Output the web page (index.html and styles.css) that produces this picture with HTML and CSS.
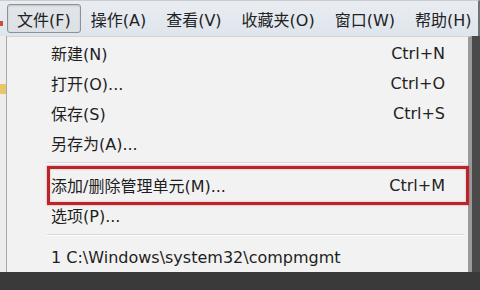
FILE: index.html
```html
<!DOCTYPE html>
<html lang="zh-CN">
<head>
<meta charset="utf-8">
<link rel="stylesheet" href="styles.css">
</head>
<body>
<div class="window">
  <div class="menubar">
    <span class="mitem pressed">文件(F)</span>
    <span class="mitem">操作(A)</span>
    <span class="mitem">查看(V)</span>
    <span class="mitem">收藏夹(O)</span>
    <span class="mitem">窗口(W)</span>
    <span class="mitem">帮助(H)</span>
    <span class="mark red"></span>
  </div>
  <div class="content">
    <div class="leftstrip">
      <span class="mark yellow"></span>
    </div>
    <div class="dropdown">
      <div class="row"><span>新建(N)</span><span class="key">Ctrl+N</span></div>
      <div class="row"><span>打开(O)...</span><span class="key">Ctrl+O</span></div>
      <div class="row"><span>保存(S)</span><span class="key">Ctrl+S</span></div>
      <div class="row"><span>另存为(A)...</span></div>
      <div class="sep"></div>
      <div class="row"><span>添加/删除管理单元(M)...</span><span class="key">Ctrl+M</span></div>
      <div class="row"><span>选项(P)...</span></div>
      <div class="sep"></div>
      <div class="row"><span>1 C:\Windows\system32\compmgmt</span></div>
      <div class="highlight"></div>
    </div>
    <div class="rightstrip"></div>
  </div>
</div>
<div class="bottom"></div>
</body>
</html>
```
FILE: styles.css
```css
html, body {
  margin: 0;
  padding: 0;
}
body {
  width: 480px;
  height: 290px;
  overflow: hidden;
  background: #3c3c3c;
  font-family: "DejaVu Sans", "Noto Sans CJK SC", sans-serif;
  font-size: 16px;
  color: #1e1e1e;
}
.window {
  height: 272px;
  display: flex;
  flex-direction: column;
  background: #f0f0f0;
}
.menubar {
  height: 36px;
  flex-shrink: 0;
  box-sizing: border-box;
  display: flex;
  align-items: center;
  padding-left: 7px;
  background: linear-gradient(#e9edf2, #dfe5ec);
  border-top: 1px solid #c9ccd0;
  border-right: 2px solid #6f7276;
  overflow: hidden;
  white-space: nowrap;
  position: relative;
}
.mitem {
  flex-shrink: 0;
  height: 29px;
  box-sizing: border-box;
  display: flex;
  align-items: center;
  padding: 0 9px;
  border: 1px solid transparent;
  color: #222;
}
.mitem.pressed {
  border-color: #8c9198;
  border-radius: 3px;
  background: linear-gradient(#e2e6eb, #dde1e6);
  box-shadow: inset 0 1px 2px rgba(0,0,0,0.15);
}
.content {
  flex: 1;
  display: flex;
}
.leftstrip {
  width: 7px;
  background: #ededed;
  border-right: 1px solid #a9a9a9;
  box-sizing: border-box;
  position: relative;
}
.mark {
  position: absolute;
  left: 0;
  width: 3px;
}
.mark.red {
  top: 20px;
  height: 5px;
  background: #d24a3c;
}
.mark.yellow {
  top: 48px;
  height: 10px;
  width: 6px;
  background: #e8c76a;
}
.dropdown {
  width: 465px;
  box-sizing: border-box;
  background: #f2f2f2;
  border-top: 1px solid #d4d4d4;
  border-right: 4px solid #9a9a9a;
  padding-top: 1px;
  position: relative;
}
.row {
  height: 30px;
  display: flex;
  align-items: center;
  justify-content: space-between;
  padding-left: 44px;
  padding-right: 23px;
}
.key {
  color: #222;
}
.sep {
  height: 12px;
  margin-left: 40px;
  margin-right: 4px;
  position: relative;
}
.sep::after {
  content: "";
  position: absolute;
  left: 0;
  right: 0;
  top: 4px;
  height: 1px;
  background: #d8d8d8;
  border-bottom: 1px solid #ffffff;
}
.highlight {
  position: absolute;
  left: 40px;
  top: 129px;
  width: 422px;
  height: 39px;
  box-sizing: border-box;
  border: 3px solid #b8262b;
  box-shadow: 0 0 2px rgba(200,40,40,0.5), inset 0 0 2px rgba(200,40,40,0.4);
}
.rightstrip {
  flex: 1;
  background: #4a4a4a;
}
.bottom {
  height: 18px;
  background: #3a3a3a;
}
```
